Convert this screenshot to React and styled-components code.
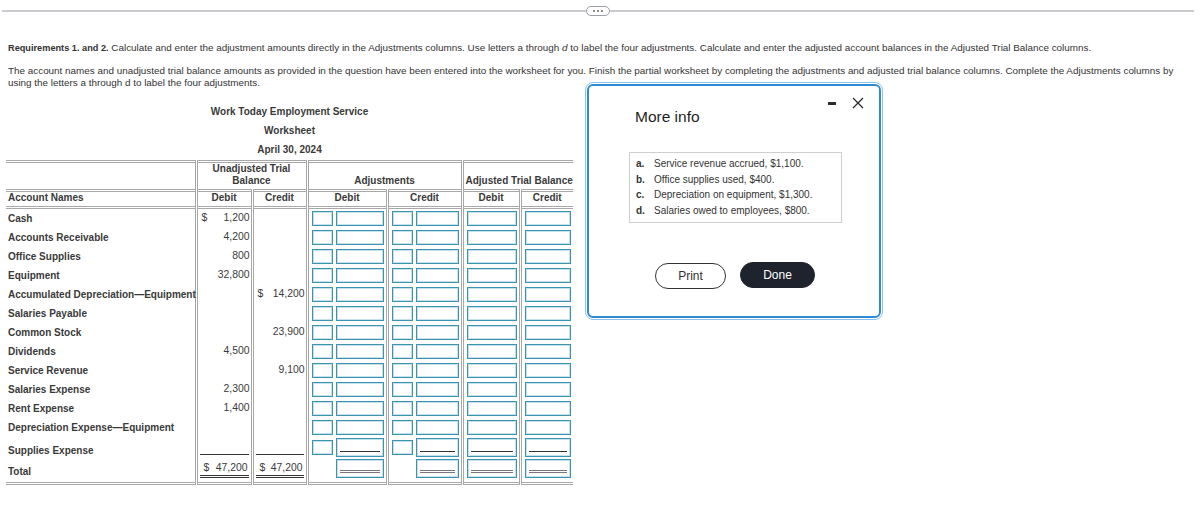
import React from "react"
import styled, { createGlobalStyle } from "styled-components"

const GlobalStyle = createGlobalStyle`
  body {
    margin: 0;
    background: #fff;
    font-family: "Liberation Sans", Arial, sans-serif;
    color: #333;
  }
`

const Page = styled.div`
  position: relative;
  width: 1200px;
  height: 526px;
  overflow: hidden;
`

const TopBar = styled.div`
  display: flex;
  align-items: center;
  height: 22px;
  padding: 0 6px 0 2px;
`

const Rule = styled.div`
  flex: 1;
  height: 2px;
  background: #c9cbcf;
`

const MorePill = styled.div`
  width: 22px;
  height: 8px;
  border: 1px solid #9aa0a6;
  border-radius: 6px;
  display: flex;
  align-items: center;
  justify-content: center;
  gap: 2px;
`

const Dot = styled.span`
  width: 2px;
  height: 2px;
  border-radius: 50%;
  background: #666;
`

const Content = styled.div`
  padding: 0 6px;
`

const Para = styled.p`
  margin: ${p => p.$top}px 0 0 2px;
  font-size: 9.9px;
  line-height: 12px;
  color: #333;
  b {
    font-weight: bold;
    font-size: 9.2px;
  }
`

const Sheet = styled.div`
  width: 567px;
  margin-top: 13px;
`

const TitleLine = styled.div`
  text-align: center;
  font-weight: bold;
  font-size: 10px;
  line-height: 19px;
  color: #3a3a3a;
`

const Table = styled.table`
  border-collapse: collapse;
  table-layout: fixed;
  width: 567px;
  margin-top: 1px;
  font-size: 10px;
  color: #3a3a3a;
  border-top: 3px double #a8a8a8;
  border-bottom: 3px double #a8a8a8;
`

const HeadRow = styled.tr`
  border-bottom: 3px double #a8a8a8;
  height: ${p => p.$h}px;
`

const Th = styled.th`
  font-weight: bold;
  text-align: ${p => (p.$left ? "left" : "center")};
  vertical-align: bottom;
  line-height: 12px;
  padding: 0 2px 2px;
  white-space: nowrap;
  border-right: ${p => (p.$last ? "none" : "3px double #a8a8a8")};
`

const Row = styled.tr`
  height: ${p => p.$h || 19}px;
`

const NameCell = styled.td`
  font-weight: bold;
  white-space: nowrap;
  padding: 0 2px ${p => p.$pb || 0}px;
  vertical-align: ${p => (p.$pb ? "bottom" : "middle")};
  border-right: 3px double #a8a8a8;
`

const AmtCell = styled.td`
  padding: 0 0 ${p => p.$pb || 0}px;
  vertical-align: ${p => p.$align || "middle"};
  border-right: 3px double #a8a8a8;
  font-size: 10.4px;
`

const Amount = styled.div`
  display: flex;
  justify-content: space-between;
  align-items: center;
  margin: ${p => (p.$kind === "total" ? "2px 2px 0" : p.$kind === "under" ? "0 2px" : "0")};
  padding: 0 1px 0 4px;
  line-height: 14px;
  border-bottom: ${p =>
    p.$kind === "total" ? "3px double #333" : p.$kind === "under" ? "1px solid #333" : "none"};
`

const InCell = styled.td`
  padding: 0 2px 0 3px;
  vertical-align: ${p => (p.$top ? "top" : "middle")};
  border-right: ${p => (p.$last ? "none" : "3px double #a8a8a8")};
`

const Boxes = styled.div`
  display: flex;
  gap: 3px;
  justify-content: flex-end;
`

const Box = styled.div`
  box-sizing: border-box;
  flex: ${p => (p.$small ? "0 0 21px" : "1")};
  height: ${p => (p.$tall && !p.$small ? 19 : 15)}px;
  margin-top: ${p => (p.$small && p.$tall ? 2 : 0)}px;
  border: 1px solid #3c93b0;
  box-shadow: inset 0 0 0 1px #c4e2ec;
  background: #fff;
  display: flex;
  flex-direction: column;
  justify-content: flex-end;
  padding: 0 3px 4px;
  visibility: ${p => (p.$ghost ? "hidden" : "visible")};
`

const Line = styled.div`
  border-bottom: ${p => (p.$double ? "3px double #777" : "1px solid #333")};
`

const Modal = styled.div`
  position: absolute;
  left: 587px;
  top: 84px;
  width: 294px;
  height: 234px;
  box-sizing: border-box;
  border: 2px solid #2f8ad6;
  border-radius: 6px;
  outline: 1px solid #8fc3ee;
  outline-offset: 1px;
  background: #fff;
  padding: 21px 0 0 40px;
`

const Controls = styled.div`
  position: absolute;
  top: 11px;
  right: 15px;
  display: flex;
  align-items: center;
  gap: 16px;
`

const Minimize = styled.div`
  width: 8px;
  height: 3px;
  background: #2b2b2b;
`

const ModalTitle = styled.div`
  margin-left: 6px;
  font-size: 15.5px;
  line-height: 20px;
  color: #1f1f1f;
`

const InfoBox = styled.div`
  margin-top: 25px;
  width: 213px;
  height: 71px;
  box-sizing: border-box;
  border: 1px solid #cfcfcf;
  padding: 3px 0 0 6px;
`

const InfoItem = styled.div`
  display: flex;
  font-size: 10px;
  line-height: 15.5px;
  color: #333;
`

const Letter = styled.span`
  width: 18px;
  font-weight: bold;
`

const Buttons = styled.div`
  display: flex;
  gap: 14px;
  margin: 39px 0 0 26px;
`

const Button = styled.div`
  box-sizing: border-box;
  width: ${p => p.$w}px;
  height: 26px;
  border-radius: 13px;
  display: flex;
  align-items: center;
  justify-content: center;
  font-size: 12px;
  border: 1px solid ${p => (p.$dark ? "#1e232d" : "#333")};
  background: ${p => (p.$dark ? "#1e232d" : "#fff")};
  color: ${p => (p.$dark ? "#fff" : "#333")};
  margin-top: ${p => (p.$dark ? 0 : 1)}px;
`

const accounts = [
  { name: "Cash", debit: "1,200", dollarD: true },
  { name: "Accounts Receivable", debit: "4,200" },
  { name: "Office Supplies", debit: "800" },
  { name: "Equipment", debit: "32,800" },
  { name: "Accumulated Depreciation\u2014Equipment", credit: "14,200", dollarC: true },
  { name: "Salaries Payable" },
  { name: "Common Stock", credit: "23,900" },
  { name: "Dividends", debit: "4,500" },
  { name: "Service Revenue", credit: "9,100" },
  { name: "Salaries Expense", debit: "2,300" },
  { name: "Rent Expense", debit: "1,400" },
  { name: "Depreciation Expense\u2014Equipment" },
]

const info = [
  ["a.", "Service revenue accrued, $1,100."],
  ["b.", "Office supplies used, $400."],
  ["c.", "Depreciation on equipment, $1,300."],
  ["d.", "Salaries owed to employees, $800."],
]

function InputCells({ tall, line, noSmall, top }) {
  const inner = line ? <Line $double={line === "double"} /> : null
  return (
    <>
      <InCell $top={top}>
        <Boxes>
          <Box $small $tall={tall} $ghost={noSmall} />
          <Box $tall={tall}>{inner}</Box>
        </Boxes>
      </InCell>
      <InCell $top={top}>
        <Boxes>
          <Box $small $tall={tall} $ghost={noSmall} />
          <Box $tall={tall}>{inner}</Box>
        </Boxes>
      </InCell>
      <InCell $top={top}>
        <Boxes>
          <Box $tall={tall}>{inner}</Box>
        </Boxes>
      </InCell>
      <InCell $last $top={top}>
        <Boxes>
          <Box $tall={tall}>{inner}</Box>
        </Boxes>
      </InCell>
    </>
  )
}

export default function App() {
  return (
    <Page>
      <GlobalStyle />
      <TopBar>
        <Rule />
        <MorePill>
          <Dot />
          <Dot />
          <Dot />
        </MorePill>
        <Rule />
      </TopBar>

      <Content>
        <Para $top={20}>
          <b>Requirements 1. and 2.</b> Calculate and enter the adjustment amounts directly in the Adjustments columns. Use letters a through <i>d</i> to label the four adjustments. Calculate and enter the adjusted account balances in the Adjusted Trial Balance columns.
        </Para>
        <Para $top={11}>
          The account names and unadjusted trial balance amounts as provided in the question have been entered into the worksheet for you. Finish the partial worksheet by completing the adjustments and adjusted trial balance columns. Complete the Adjustments columns by using the letters a through d to label the four adjustments.
        </Para>

        <Sheet>
          <TitleLine>Work Today Employment Service</TitleLine>
          <TitleLine>Worksheet</TitleLine>
          <TitleLine>April 30, 2024</TitleLine>

          <Table>
            <colgroup>
              <col style={{ width: 190 }} />
              <col style={{ width: 56 }} />
              <col style={{ width: 55 }} />
              <col style={{ width: 80 }} />
              <col style={{ width: 75 }} />
              <col style={{ width: 58 }} />
              <col style={{ width: 53 }} />
            </colgroup>
            <thead>
              <HeadRow $h={27}>
                <Th />
                <Th colSpan={2}>Unadjusted Trial<br />Balance</Th>
                <Th colSpan={2}>Adjustments</Th>
                <Th colSpan={2} $last>Adjusted Trial Balance</Th>
              </HeadRow>
              <HeadRow $h={16}>
                <Th $left>Account Names</Th>
                <Th>Debit</Th>
                <Th>Credit</Th>
                <Th>Debit</Th>
                <Th>Credit</Th>
                <Th>Debit</Th>
                <Th $last>Credit</Th>
              </HeadRow>
            </thead>
            <tbody>
              {accounts.map((a, i) => (
                <Row key={a.name} $h={i === 0 ? 20 : 19}>
                  <NameCell>{a.name}</NameCell>
                  <AmtCell>
                    {a.debit && (
                      <Amount>
                        <span>{a.dollarD ? "$" : ""}</span>
                        <span>{a.debit}</span>
                      </Amount>
                    )}
                  </AmtCell>
                  <AmtCell>
                    {a.credit && (
                      <Amount>
                        <span>{a.dollarC ? "$" : ""}</span>
                        <span>{a.credit}</span>
                      </Amount>
                    )}
                  </AmtCell>
                  <InputCells />
                </Row>
              ))}
              <Row $h={22}>
                <NameCell $pb={3}>Supplies Expense</NameCell>
                <AmtCell $align="bottom" $pb={4}>
                  <Amount $kind="under" />
                </AmtCell>
                <AmtCell $align="bottom" $pb={4}>
                  <Amount $kind="under" />
                </AmtCell>
                <InputCells tall line="single" />
              </Row>
              <Row $h={25}>
                <NameCell $pb={5}>Total</NameCell>
                <AmtCell $align="top">
                  <Amount $kind="total">
                    <span>$</span>
                    <span>47,200</span>
                  </Amount>
                </AmtCell>
                <AmtCell $align="top">
                  <Amount $kind="total">
                    <span>$</span>
                    <span>47,200</span>
                  </Amount>
                </AmtCell>
                <InputCells tall line="double" noSmall top />
              </Row>
            </tbody>
          </Table>
        </Sheet>
      </Content>

      <Modal>
        <Controls>
          <Minimize />
          <svg width="12" height="12" viewBox="0 0 12 12">
            <path d="M1 1 L11 11 M11 1 L1 11" stroke="#2b2b2b" strokeWidth="1.3" fill="none" />
          </svg>
        </Controls>
        <ModalTitle>More info</ModalTitle>
        <InfoBox>
          {info.map(([l, t]) => (
            <InfoItem key={l}>
              <Letter>{l}</Letter>
              <span>{t}</span>
            </InfoItem>
          ))}
        </InfoBox>
        <Buttons>
          <Button $w={71}>Print</Button>
          <Button $w={75} $dark>Done</Button>
        </Buttons>
      </Modal>
    </Page>
  )
}
